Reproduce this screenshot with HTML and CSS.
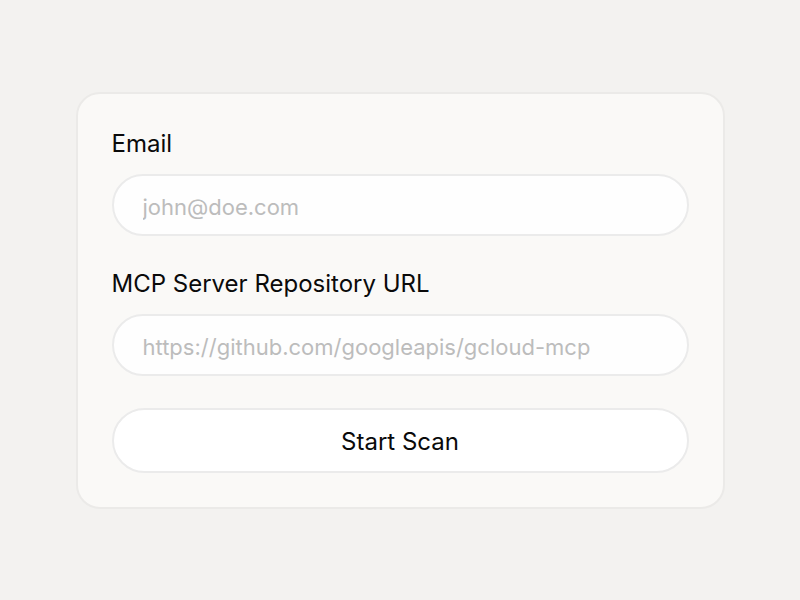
FILE: index.html
```html
<!DOCTYPE html>
<html>
<head>
<meta charset="utf-8">
<link rel="stylesheet" href="styles.css">
</head>
<body>
<main class="page">
  <form class="card">
    <label class="label" for="email">Email</label>
    <input class="field" id="email" type="text" placeholder="john@doe.com">
    <label class="label second" for="repo">MCP Server Repository URL</label>
    <input class="field" id="repo" type="text" placeholder="https://github.com/googleapis/gcloud-mcp">
    <button class="btn" type="button">Start Scan</button>
  </form>
</main>
</body>
</html>
```
FILE: styles.css
```css
html, body {
  margin: 0;
  padding: 0;
  background: #f3f2f0;
  font-family: Inter, "Noto Sans", sans-serif;
}
.page {
  width: 800px;
  height: 600px;
  display: flex;
  align-items: flex-start;
  justify-content: center;
  padding-top: 92px;
  box-sizing: border-box;
}
.card {
  width: 649px;
  box-sizing: border-box;
  background: #faf9f7;
  border: 2px solid #ebeae8;
  border-radius: 24px;
  padding: 35px 34px 34px 34px;
  display: flex;
  flex-direction: column;
}
.label {
  font-size: 24px;
  line-height: 30px;
  color: #0a0a0a;
  margin-bottom: 15px;
}
.label.second {
  margin-top: 33px;
}
.field {
  height: 62px;
  box-sizing: border-box;
  border: 2px solid #ebebeb;
  border-radius: 31px;
  background: #fefefe;
  padding: 3px 29px 0 29px;
  font-family: Inter, "Noto Sans", sans-serif;
  font-size: 22px;
  color: #111;
  outline: none;
}
.field::placeholder {
  color: #bcbcbc;
}
.btn {
  margin-top: 32px;
  height: 65px;
  border: 2px solid #ebebeb;
  border-radius: 33px;
  background: #ffffff;
  padding-top: 2px;
  font-family: Inter, "Noto Sans", sans-serif;
  font-size: 24px;
  color: #0a0a0a;
  cursor: pointer;
}
```
